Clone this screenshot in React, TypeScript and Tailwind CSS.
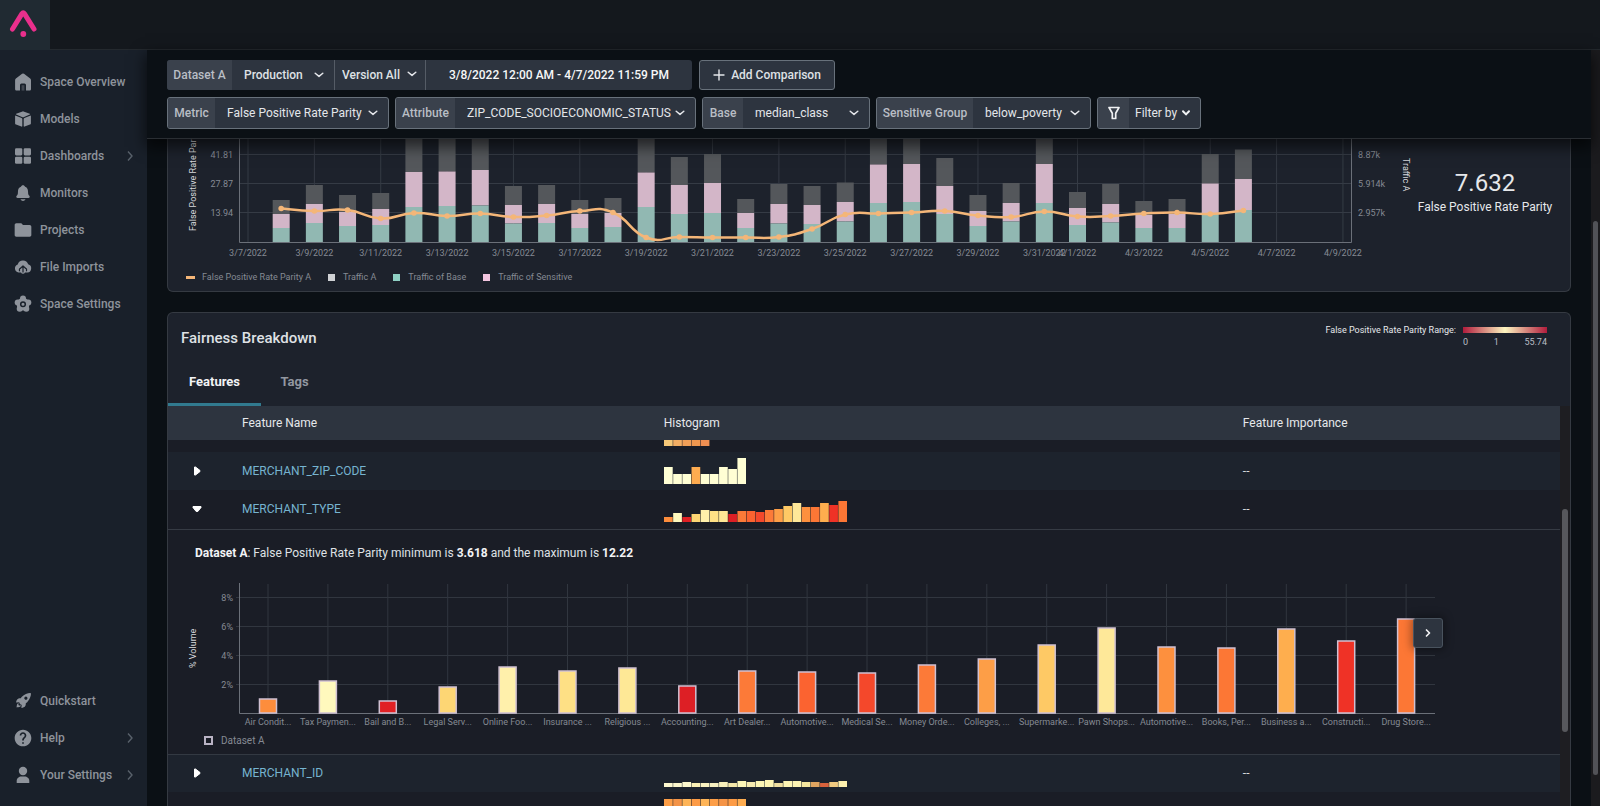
import React from "react";
import { IoNotifications, IoRocketSharp } from "react-icons/io5";
import { MdFolder, MdHelp } from "react-icons/md";

const INK = "#1a212b";

/* ---------- icons ---------- */

function Logo() {
  return (
    <svg viewBox="0 0 50 50" className="h-[50px] w-[50px]" aria-hidden="true">
      <path d="M12.5 29 L22 13.6 Q23.2 11.8 24.4 13.6 L34 29" fill="none" stroke="#ea2f8c" strokeWidth="5" strokeLinecap="round" strokeLinejoin="round" />
      <circle cx="23.3" cy="34" r="2.9" fill="#ea2f8c" />
    </svg>
  );
}

const HomeIcon = () => (
  <svg viewBox="0 0 18 18" className="h-[18px] w-[18px]" aria-hidden="true">
    <path fill="currentColor" d="M8.1.8a1.6 1.6 0 0 1 1.9 0l6.2 4.8c.5.4.8 1 .8 1.6V16c0 1-.6 1.600-1.600 1.600H12V12a1.500 1.500 0 0 0-1.500-1.500h-3A1.500 1.500 0 0 0 6 12v5.600H2.700c-1 0-1.600-.6-1.600-1.600V7.200c0-.6.3-1.200.8-1.600z" />
    <path fill="currentColor" d="M7.600 12.200h2.800v5.400H7.600z" opacity="0.35" />
  </svg>
);

const CubeIcon = () => (
  <svg viewBox="0 0 18 18" className="h-[18px] w-[18px]" fill="currentColor" aria-hidden="true">
    <path d="M8.500 1.400a1.500 1.500 0 0 1 1 0l6.300 2.400c.5.2.5.6 0 .8L9.500 7.200a1.500 1.500 0 0 1-1 0L2.200 4.600c-.5-.2-.5-.6 0-.8z" />
    <path d="M1.100 6.200c0-.5.4-.7.800-.5l5.700 2.300c.4.200.7.500.7 1v7c0 .5-.4.800-.9.600L2 14.600c-.5-.2-.9-.7-.9-1.200z" />
    <path d="M16.900 6.200c0-.5-.4-.7-.8-.5L10.400 8c-.4.200-.7.500-.7 1v7c0 .5.4.800.9.600l5.400-2c.5-.2.900-.7.900-1.200z" />
  </svg>
);

const GridIcon = () => (
  <svg viewBox="0 0 18 18" className="h-[18px] w-[18px]" fill="currentColor" aria-hidden="true">
    <rect x="1" y="1.300" width="7.300" height="7.100" rx="1.300" />
    <rect x="9.700" y="1.300" width="7.300" height="7.100" rx="1.300" />
    <rect x="1" y="9.700" width="7.300" height="7.100" rx="1.300" />
    <rect x="9.700" y="9.700" width="7.300" height="7.100" rx="1.300" />
  </svg>
);

const CloudIcon = () => (
  <svg viewBox="0 0 18 18" className="h-[18px] w-[18px]" aria-hidden="true">
    <path fill="currentColor" d="M4.600 14.500A4.200 4.200 0 0 1 3.700 6.400 5.500 5.500 0 0 1 14.200 6.300a4.200 4.200 0 0 1-.8 8.200H11a2.200 2.200 0 0 1-4 0z" />
    <path fill="none" stroke={INK} strokeWidth="1.200" strokeLinecap="round" strokeLinejoin="round" d="M9 14V8.600M6.500 10.300 9 7.900l2.500 2.400M5.500 12.800a2.600 2.600 0 0 1 .3-2.200M12.500 12.800a2.600 2.600 0 0 0-.3-2.200" />
  </svg>
);

const FlowerIcon = () => (
  <svg viewBox="0 0 18 18" className="h-[18px] w-[18px]" fill="currentColor" aria-hidden="true">
    <circle cx="9" cy="9.200" r="6.400" />
    <circle cx="9" cy="3.600" r="3" />
    <circle cx="14.300" cy="7.500" r="3" />
    <circle cx="12.300" cy="13.800" r="3" />
    <circle cx="5.700" cy="13.800" r="3" />
    <circle cx="3.700" cy="7.500" r="3" />
    <circle cx="9" cy="9.200" r="2.300" fill="none" stroke={INK} strokeWidth="1.500" />
  </svg>
);

const PersonIcon = () => (
  <svg viewBox="0 0 18 18" className="h-[18px] w-[18px]" fill="currentColor" aria-hidden="true">
    <circle cx="9" cy="5" r="4.200" />
    <path d="M2.700 16.900v-2.200c0-2.400 2.400-4.200 4.500-4.200h3.600c2.100 0 4.500 1.800 4.500 4.200v2.200z" />
  </svg>
);

function Chevron({ className = "" }: { className?: string }) {
  return (
    <svg viewBox="0 0 10 6" className={`h-[6px] w-[10px] ${className}`} fill="none" stroke="#e4e6ea" strokeWidth="1.500" strokeLinecap="round" strokeLinejoin="round" aria-hidden="true">
      <path d="M1.200 1.200 5 4.400 8.800 1.200" />
    </svg>
  );
}

/* ---------- sidebar ---------- */

type NavEntry = { label: string; icon: React.ReactNode; more?: boolean };

const mainNav: NavEntry[] = [
  { label: "Space Overview", icon: <HomeIcon /> },
  { label: "Models", icon: <CubeIcon /> },
  { label: "Dashboards", icon: <GridIcon />, more: true },
  { label: "Monitors", icon: <IoNotifications className="h-[18px] w-[18px]" /> },
  { label: "Projects", icon: <MdFolder className="h-5 w-5 shrink-0" /> },
  { label: "File Imports", icon: <CloudIcon /> },
  { label: "Space Settings", icon: <FlowerIcon /> },
];

const footNav: NavEntry[] = [
  { label: "Quickstart", icon: <IoRocketSharp className="h-[17px] w-[17px]" /> },
  { label: "Help", icon: <MdHelp className="h-5 w-5 shrink-0" />, more: true },
  { label: "Your Settings", icon: <PersonIcon />, more: true },
];

function NavList({ items }: { items: NavEntry[] }) {
  return (
    <ul>
      {items.map((it) => (
        <li key={it.label}>
          <a href="#" className="flex h-[37px] items-center gap-2 pr-[13px] pl-[14px] text-[12px] font-medium text-[#8e939b]">
            <span className="flex w-[18px] justify-center">{it.icon}</span>
            <span className="flex-1 whitespace-nowrap">{it.label}</span>
            {it.more && (
              <svg viewBox="0 0 8 12" className="h-3 w-2" fill="none" stroke="#59616b" strokeWidth="1.400" aria-hidden="true">
                <path d="M2 1.500 6 6 2 10.500" />
              </svg>
            )}
          </a>
        </li>
      ))}
    </ul>
  );
}

/* ---------- toolbar ---------- */

type FieldProps = { id: string; label: string; value: string; width: string; labelWidth: string };

function Field({ id, label, value, width, labelWidth }: FieldProps) {
  return (
    <div className={`flex h-8 overflow-hidden rounded-[3px] border border-[#68717b] bg-[#2d343f] text-[12px] ${width}`}>
      <label htmlFor={id} className={`flex shrink-0 items-center justify-center bg-[#3a414c] font-medium whitespace-nowrap text-[#b9bec5] ${labelWidth}`}>
        {label}
      </label>
      <div className="relative flex min-w-0 flex-1">
        <select id={id} className="w-full appearance-none pl-3 text-[#e4e6ea] outline-none">
          <option>{value}</option>
        </select>
        <Chevron className="pointer-events-none absolute top-3 right-[10px]" />
      </div>
    </div>
  );
}

function Toolbar() {
  return (
    <div className="relative z-10 flex flex-col gap-[7px] border-b border-[#2a2e33] bg-[#0b1015] px-5 pt-[10px] pb-[9px] shadow-[0_6px_14px_2px_rgba(0,0,0,0.6)]">
      <div className="flex gap-[7px] text-[12px]">
        <div className="flex h-[30px] overflow-hidden rounded-[3px] bg-[#2d343f]">
          <label htmlFor="dataset" className="flex w-[65px] items-center justify-center bg-[#3a414c] font-medium whitespace-nowrap text-[#b9bec5]">
            Dataset A
          </label>
          <div className="relative flex border-r border-[#555c66]">
            <select id="dataset" className="w-[102px] appearance-none pl-3 font-medium text-[#dfe1e5] outline-none">
              <option>Production</option>
            </select>
            <Chevron className="pointer-events-none absolute top-3 right-[10px]" />
          </div>
          <div className="relative flex border-r border-[#555c66]">
            <select aria-label="Version" className="w-[90px] appearance-none pl-[7px] font-medium text-[#dfe1e5] outline-none">
              <option>Version All</option>
            </select>
            <Chevron className="pointer-events-none absolute top-[11px] right-[8px]" />
          </div>
          <button type="button" className="w-[266px] font-medium text-[#f6f7f8]">
            3/8/2022 12:00 AM - 4/7/2022 11:59 PM
          </button>
        </div>
        <button type="button" className="flex h-[30px] w-[136px] items-center justify-center gap-[6px] rounded-[3px] border border-[#68717b] bg-[#2d343f] font-medium text-[#dfe1e5]">
          <svg viewBox="0 0 12 12" className="h-3 w-3" stroke="#e4e6ea" strokeWidth="1.400" strokeLinecap="round" aria-hidden="true">
            <path d="M6 1v10M1 6h10" />
          </svg>
          Add Comparison
        </button>
      </div>
      <div className="flex gap-[6px]">
        <Field id="metric" label="Metric" value="False Positive Rate Parity" width="w-[222px]" labelWidth="w-[47px]" />
        <Field id="attribute" label="Attribute" value="ZIP_CODE_SOCIOECONOMIC_STATUS" width="w-[301px]" labelWidth="w-[59px]" />
        <Field id="base" label="Base" value="median_class" width="w-[168px]" labelWidth="w-[40px]" />
        <Field id="group" label="Sensitive Group" value="below_poverty" width="w-[215px]" labelWidth="w-[96px]" />
        <button type="button" className="flex h-8 w-[104px] items-center overflow-hidden rounded-[3px] border border-[#68717b] bg-[#2d343f] text-[12px] text-[#e4e6ea]">
          <span className="flex h-full w-[31px] items-center justify-center bg-[#3a414c]">
            <svg viewBox="0 0 14 14" className="h-[14px] w-[14px]" fill="none" stroke="#f0f1f3" strokeWidth="1.700" strokeLinejoin="round" aria-hidden="true">
              <path d="M2 1.500h10L8.700 7.200v5.300H5.300V7.200z" />
            </svg>
          </span>
          <span className="flex flex-1 items-center gap-1 pl-[6px] whitespace-nowrap">
            Filter by
            <svg viewBox="0 0 10 8" className="h-2 w-[10px]" fill="none" stroke="#f0f1f3" strokeWidth="2" strokeLinecap="round" strokeLinejoin="round" aria-hidden="true">
              <path d="M2 2.200 5 5.400 8 2.200" />
            </svg>
          </span>
        </button>
      </div>
    </div>
  );
}

/* ---------- traffic chart ---------- */

/* per day: top of total, sensitive and base bars, then the metric line (distance above the baseline) */
const days: [number, number, number, number][] = [
  [42, 28, 14, 33.500], [57, 38, 19, 31], [47, 30, 16, 32], [49, 33, 17, 23.500], [120, 70, 35, 29],
  [120, 70.500, 36, 26], [120, 72, 36.500, 28.500], [56, 37, 18.500, 25], [57, 38, 19, 26.500], [42, 28, 14, 31],
  [44, 29, 15, 29.500], [120, 69.500, 35, 4.500], [85, 57, 28, 5], [88, 59, 29, 4.500], [43, 29, 14, 4.500],
  [58, 38, 18.500, 5], [56, 37, 18, 13], [59.500, 40, 20.500, 27.500], [120, 77.500, 39, 28.500], [120, 78, 40, 29.500],
  [84, 56, 28, 31], [47, 31, 16, 26.500], [59, 39, 20.500, 25], [120, 78, 39, 30.500], [50, 34, 17, 25.500],
  [58, 38, 19.500, 26], [41, 27, 14, 28.500], [43, 28, 14, 29.500], [88, 58.500, 29, 28], [92.500, 63, 32, 31.500],
];

const tickDays: [number, string][] = [
  [0, "3/7/2022"], [2, "3/9/2022"], [4, "3/11/2022"], [6, "3/13/2022"], [8, "3/15/2022"], [10, "3/17/2022"],
  [12, "3/19/2022"], [14, "3/21/2022"], [16, "3/23/2022"], [18, "3/25/2022"], [20, "3/27/2022"], [22, "3/29/2022"],
  [24, "3/31/2022"], [25, "4/1/2022"], [27, "4/3/2022"], [29, "4/5/2022"], [31, "4/7/2022"], [33, "4/9/2022"],
];

function smooth(p: [number, number][]) {
  const k = 0.25;
  let d = `M${p[0][0]} ${p[0][1]}`;
  for (let i = 0; i < p.length - 1; i++) {
    const a = p[Math.max(i - 1, 0)];
    const b = p[i];
    const c = p[i + 1];
    const e = p[Math.min(i + 2, p.length - 1)];
    d += ` C${b[0] + (c[0] - a[0]) * k} ${b[1] + (c[1] - a[1]) * k} ${c[0] - (e[0] - b[0]) * k} ${c[1] - (e[1] - b[1]) * k} ${c[0]} ${c[1]}`;
  }
  return d;
}

function TrafficChart() {
  const x = (d: number) => 80 + d * 33.18;
  const base = 103;
  const pts = days.map((d, i) => [x(i + 1), base - d[3]] as [number, number]);
  return (
    <svg viewBox="0 0 1250 123" className="block w-full" role="img" aria-label="False Positive Rate Parity and traffic by day">
      <g stroke="#353b45" strokeWidth="1">
        {[15.5, 44.5, 73.5].map((y) => (
          <line key={y} x1="71" x2="1183" y1={y} y2={y} />
        ))}
        {tickDays.map(([d]) => (
          <line key={d} x1={x(d)} x2={x(d)} y1="0" y2={base} />
        ))}
      </g>
      {days.map((d, i) => (
        <g key={i}>
          <rect x={x(i + 1) - 8.5} width="17" y={base - d[0]} height={d[0] - d[1]} fill="#54575b" />
          <rect x={x(i + 1) - 8.5} width="17" y={base - d[1]} height={d[1] - d[2]} fill="#d3b6c8" />
          <rect x={x(i + 1) - 8.5} width="17" y={base - d[2]} height={d[2]} fill="#91b8b2" />
        </g>
      ))}
      <path d="M71.500 0V103.500H1183.500V0" fill="none" stroke="#6b7079" />
      <path d={smooth(pts)} fill="none" stroke="#f4b678" strokeWidth="2.500" />
      {pts.map((p, i) => (
        <circle key={i} cx={p[0]} cy={p[1]} r="2.800" fill="#f4b678" />
      ))}
      <g className="fill-[#858a93] text-[9px]">
        {["41.81", "27.87", "13.94"].map((t, i) => (
          <text key={t} x="65" y={19 + i * 29} textAnchor="end">{t}</text>
        ))}
        {["8.87k", "5.914k", "2.957k"].map((t, i) => (
          <text key={t} x="1190" y={19 + i * 29}>{t}</text>
        ))}
        {tickDays.map(([d, t]) => (
          <text key={t} x={x(d)} y="117" textAnchor="middle">{t}</text>
        ))}
      </g>
      <g className="fill-[#d5d7db] text-[9px]">
        <text transform="translate(28 92) rotate(-90)">False Positive Rate Parity A</text>
        <text transform="translate(1235 19) rotate(90)">Traffic A</text>
      </g>
    </svg>
  );
}

function TrafficCard() {
  return (
    <section className="rounded-b-[6px] border border-t-0 border-[#353a42] bg-[#1d222c] pb-[7px]">
      <div className="flex">
        <div className="min-w-0 flex-1">
          <TrafficChart />
        </div>
        <div className="flex w-[152px] flex-col items-center pt-7 pr-[18px] whitespace-nowrap text-[#e6e8eb]">
          <span className="text-[24px] leading-8">7.632</span>
          <span className="text-[12px] leading-4">False Positive Rate Parity</span>
        </div>
      </div>
      <div className="flex items-center gap-[17px] pt-[9px] pl-[18px] text-[9px] leading-[13px] text-[#858a93]">
        <span className="flex items-center gap-[7px]"><i className="h-[3px] w-[9px] bg-[#f4b678]" />False Positive Rate Parity A</span>
        <span className="flex items-center gap-2"><i className="h-[7px] w-[7px] bg-[#cfd1d4]" />Traffic A</span>
        <span className="flex items-center gap-2"><i className="h-[7px] w-[7px] bg-[#8fd0c4]" />Traffic of Base</span>
        <span className="flex items-center gap-2"><i className="h-[7px] w-[7px] bg-[#f3c6e0]" />Traffic of Sensitive</span>
      </div>
    </section>
  );
}

/* ---------- breakdown ---------- */

type Bar = [number, string];

const categories: [string, number, string][] = [
  ["Air Condit...", 15, "#fd8d3c"], ["Tax Paymen...", 33, "#fff9bd"], ["Bail and B...", 13, "#e02024"],
  ["Legal Serv...", 27, "#fdd674"], ["Online Foo...", 47, "#fff0ab"], ["Insurance ...", 43, "#fee085"],
  ["Religious ...", 46, "#fee896"], ["Accounting...", 28, "#dd1f25"], ["Art Dealer...", 43, "#fc7a38"],
  ["Automotive...", 42, "#fb6330"], ["Medical Se...", 41, "#f4482b"], ["Money Orde...", 49, "#fc7a38"],
  ["Colleges, ...", 55, "#fd9e47"], ["Supermarke...", 69, "#fec965"], ["Pawn Shops...", 86, "#fee899"],
  ["Automotive...", 67, "#fd903e"], ["Books, Per...", 66, "#fc7735"], ["Business a...", 85, "#feae4e"],
  ["Constructi...", 73, "#ef3226"], ["Drug Store...", 95, "#fc7735"],
];

const cream = "#ffffd4";
const zipBars: Bar[] = [[17, cream], [10, cream], [10, cream], [17, "#feac50"], [10, cream], [10, cream], [17, cream], [15, cream], [26, cream]];
const typeHeights = [5, 9, 5, 8, 12, 11, 11, 8, 11, 11, 10, 12, 13, 16, 19, 15, 15, 19, 17, 21];
const typeBars: Bar[] = categories.map((c, i) => [typeHeights[i], c[2]]);
const idBars: Bar[] = [4, 4, 5, 4, 4, 4, 5, 4, 6, 5, 6, 7, 4, 6, 6, 5, 5, 4, 5, 6].map((h, i) => [
  h,
  ["#fdf8cf", "#fbf6cc", "#fcf7cd", "#f9efb4", "#faf2c0", "#f6efc0", "#f7efbb", "#f3e6a8", "#fdf6b8", "#f6ebb0", "#fdf6b5", "#fff6b3", "#f0dfa0", "#fff6b5", "#fdf4b3", "#f5e69e", "#dfa460", "#d9623c", "#f0ca80", "#fdf0ae"][i],
]);
const firstBars: Bar[] = [[6, "#f5c777"], [6, "#f2ad63"], [6, "#f09f58"], [6, "#f0974f"], [6, "#ef8f52"]];
const lastBars: Bar[] = ["#fd9e47", "#f39347", "#feb457", "#fd9b45", "#feb457", "#fd9e47", "#f59446", "#fd9b45", "#feac50"].map((c) => [20, c]);

function MiniBars({ bars }: { bars: Bar[] }) {
  const w = bars.length * 9.18;
  return (
    <svg viewBox={`0 0 ${w} 26`} width={w} height="26" className="block" aria-hidden="true">
      {bars.map(([h, c], i) => (
        <rect key={i} x={i * 9.18} y={26 - h} width="8.700" height={h} fill={c} />
      ))}
    </svg>
  );
}

function VolumeChart() {
  const x = (i: number) => 100 + i * 59.9;
  const base = 140;
  return (
    <svg viewBox="0 0 1392 160" className="block w-full" role="img" aria-label="Volume by merchant type">
      <g stroke="#31363f">
        {[24, 53, 82, 111].map((y) => (
          <line key={y} x1="68" x2="1267" y1={y + 0.5} y2={y + 0.5} />
        ))}
        {categories.map((_, i) => (
          <line key={i} x1={x(i)} x2={x(i)} y1="11" y2={base} />
        ))}
      </g>
      <path d="M71.500 10V140.500H1267" fill="none" stroke="#6b7079" />
      {categories.map(([, h, c], i) => (
        <rect key={i} x={x(i) - 8.5} y={base - h + 1} width="17" height={h - 1} fill={c} stroke="#cfc0d2" strokeWidth="1.500" />
      ))}
      <g className="fill-[#858a93] text-[9px]">
        {["8%", "6%", "4%", "2%"].map((t, i) => (
          <text key={t} x="65" y={28 + i * 29} textAnchor="end">{t}</text>
        ))}
        {categories.map(([t], i) => (
          <text key={i} x={x(i)} y="152" textAnchor="middle">{t}</text>
        ))}
      </g>
      <text transform="translate(28 95) rotate(-90)" className="fill-[#d5d7db] text-[9px]">% Volume</text>
    </svg>
  );
}

function FeatureRow({ name, bars, open = false }: { name: string; bars: Bar[]; open?: boolean }) {
  return (
    <tr className={open ? "h-[39px] border-b border-[#363b44] bg-[#1a1d26]" : "h-[38px] bg-[#1d232d]"}>
      <td className="p-0 pl-6">
        <button type="button" aria-label={`${open ? "Collapse" : "Expand"} ${name}`} aria-expanded={open} className="block">
          <svg viewBox="0 0 10 10" className="h-[10px] w-[10px]" fill="#fff" stroke="#fff" strokeWidth="1" strokeLinejoin="round" aria-hidden="true">
            {open ? <path d="M1 2.500h8v1L5.800 7.500H4.200L1 3.500z" /> : <path d="M2.500 1h1L8 4.500v1L3.500 9h-1z" />}
          </svg>
        </button>
      </td>
      <td className="p-0"><a href="#" className="text-[#76b4d0]">{name}</a></td>
      <td className="p-0 pt-[6px] align-top"><MiniBars bars={bars} /></td>
      <td className="p-0 text-[#d5d7db]">--</td>
    </tr>
  );
}

function Breakdown() {
  return (
    <section className="mt-5 flex min-h-0 flex-1 flex-col rounded-t-[6px] border border-b-0 border-[#353a42] bg-[#1d222c]">
      <div className="flex h-[39px] justify-between pt-[11px] pr-[23px] pl-[13px]">
        <h2 className="pt-[2px] text-[15px] leading-6 font-medium text-[#dfe1e5]">Fairness Breakdown</h2>
        <div className="flex gap-[7px] text-[9px] leading-3 text-[#e6e8eb]">
          <span>False Positive Rate Parity Range:</span>
          <div className="w-[84px] pt-[3px]">
            <div className="h-[6px] bg-[linear-gradient(90deg,#b01c3c,#fdf6c0_50%,#b01c3c)]" />
            <div className="flex justify-between pt-[3px] text-[#b9bec5]">
              <span>0</span>
              <span>1</span>
              <span>55.74</span>
            </div>
          </div>
        </div>
      </div>
      <div role="tablist" className="mt-[9px] flex h-[45px] text-[13px] font-bold">
        <button type="button" role="tab" aria-selected="true" className="w-[93px] border-b-[3px] border-[#317a8f] text-[#f2f3f5]">Features</button>
        <button type="button" role="tab" aria-selected="false" className="w-[67px] border-b-[3px] border-transparent text-[#9297a0]">Tags</button>
      </div>
      <div className="flex min-h-0 flex-1 overflow-hidden">
        <div className="min-w-0 flex-1">
          <table className="w-full table-fixed border-collapse text-left text-[12px]">
            <colgroup>
              <col className="w-[74px]" />
              <col className="w-[30.3%]" />
              <col className="w-[41.6%]" />
              <col />
            </colgroup>
            <thead>
              <tr className="h-[34px] bg-[#2d343f] text-[#e6e8eb]">
                <td className="p-0" />
                <th className="p-0 font-normal">Feature Name</th>
                <th className="p-0 font-normal">Histogram</th>
                <th className="p-0 font-normal">Feature Importance</th>
              </tr>
            </thead>
            <tbody>
              <tr className="h-3 bg-[#1a1d26]">
                <td className="p-0" colSpan={2} />
                <td className="p-0">
                  <div className="flex h-3 items-start overflow-hidden"><div className="-mt-5"><MiniBars bars={firstBars} /></div></div>
                </td>
                <td className="p-0" />
              </tr>
              <FeatureRow name="MERCHANT_ZIP_CODE" bars={zipBars} />
              <FeatureRow name="MERCHANT_TYPE" bars={typeBars} open />
              <tr className="border-b border-[#333942] bg-[#1a1d26]">
                <td colSpan={4} className="p-0">
                  <p className="pt-[15px] pl-[27px] leading-4 text-[#dfe1e5]">
                    <b className="text-[#f2f3f5]">Dataset A</b>: False Positive Rate Parity minimum is <b className="text-[#f2f3f5]">3.618</b> and the maximum is <b className="text-[#f2f3f5]">12.22</b>
                  </p>
                  <div className="relative mt-3">
                    <VolumeChart />
                    <button type="button" aria-label="Next categories" className="absolute top-[45px] left-[1245px] flex h-[30px] w-[30px] items-center justify-center rounded-[3px] border border-[#49535e] bg-[#2d343f] shadow-[0_0_8px_2px_rgba(0,0,0,0.35)]">
                      <svg viewBox="0 0 8 10" className="h-[10px] w-2" fill="none" stroke="#f0f1f3" strokeWidth="1.700" strokeLinecap="round" strokeLinejoin="round" aria-hidden="true">
                        <path d="M2.500 2 5.500 5 2.500 8" />
                      </svg>
                    </button>
                  </div>
                  <div className="flex items-center gap-2 pb-[5px] pl-9 text-[10px] leading-4 text-[#858a93]">
                    <i className="h-[9px] w-[9px] border-2 border-[#b9b3c4]" />
                    Dataset A
                  </div>
                </td>
              </tr>
              <FeatureRow name="MERCHANT_ID" bars={idBars} />
              <tr className="bg-[#1a1d26]">
                <td className="p-0" colSpan={2} />
                <td className="p-0 pt-[1px]"><MiniBars bars={lastBars} /></td>
                <td className="p-0" />
              </tr>
            </tbody>
          </table>
        </div>
        <div className="w-[10px] bg-[#1e1e22] px-[2px] pt-[103px]">
          <div className="h-[223px] rounded-full bg-[#57585c]" />
        </div>
      </div>
    </section>
  );
}

export default function App() {
  return (
    <div className="flex h-screen flex-col overflow-hidden bg-[#0b1015] [font-family:Roboto,'Liberation_Sans',sans-serif]">
      <header className="flex h-[50px] shrink-0 border-b border-[#24292e] bg-[#14181d]">
        <a href="#" aria-label="Home" className="h-[50px] w-[50px] bg-[#202a32]"><Logo /></a>
      </header>
      <div className="flex min-h-0 flex-1">
        <nav className="flex w-[147px] shrink-0 flex-col justify-between bg-[#19202a] pt-[13px] pb-[13px]">
          <NavList items={mainNav} />
          <NavList items={footNav} />
        </nav>
        <main className="flex min-w-0 flex-1 flex-col">
          <Toolbar />
          <div className="flex min-h-0 flex-1 flex-col px-5">
            <TrafficCard />
            <Breakdown />
          </div>
        </main>
        <div className="w-[9px] shrink-0 bg-[#1b1b1e] px-[2px] pt-[171px]">
          <div className="h-[554px] rounded-full bg-[#515257]" />
        </div>
      </div>
    </div>
  );
}
